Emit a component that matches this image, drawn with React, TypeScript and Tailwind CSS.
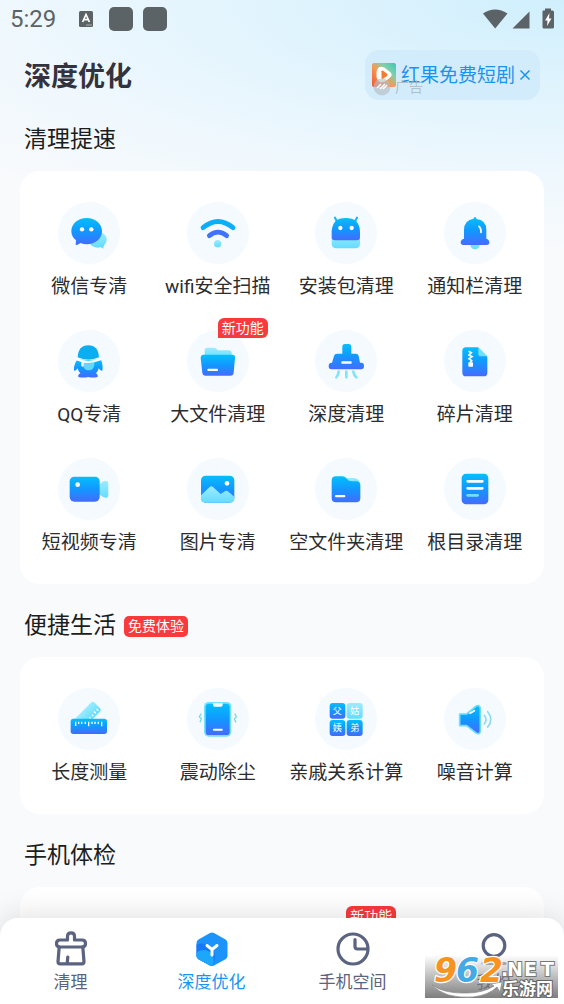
import type { ReactNode } from "react";

const MAIN = "url(#tone-main)";
const LIGHT = "url(#tone-light)";

function Tones() {
  return (
    <svg className="absolute size-0" aria-hidden="true">
      <defs>
        <linearGradient id="tone-main" x1="0" y1="0" x2="0" y2="1">
          <stop offset="0" stopColor="#05bffb" />
          <stop offset="0.5" stopColor="#1297ff" />
          <stop offset="1" stopColor="#456bff" />
        </linearGradient>
        <linearGradient id="tone-light" x1="0" y1="0" x2="0" y2="1">
          <stop offset="0" stopColor="#9cecff" />
          <stop offset="1" stopColor="#63dcff" />
        </linearGradient>
        <linearGradient id="tone-ad" x1="0" y1="1" x2="1" y2="0">
          <stop offset="0" stopColor="#f4512c" />
          <stop offset="0.45" stopColor="#f79a55" />
          <stop offset="0.7" stopColor="#7fd0ae" />
          <stop offset="1" stopColor="#35c8b4" />
        </linearGradient>
        <linearGradient id="tone-mark" x1="0" y1="0" x2="0" y2="1">
          <stop offset="0" stopColor="#777" stopOpacity="0" />
          <stop offset="1" stopColor="#777" stopOpacity="0.95" />
        </linearGradient>
      </defs>
    </svg>
  );
}

const icons = {
  chat: (
    <>
      <ellipse cx="119" cy="113" rx="27" ry="24" fill={LIGHT} />
      <path d="M122 132 L136 140 L138 124Z" fill="#63dcff" />
      <path d="M86 48C60 48 40 65 40 88C40 100 46 108 54 115L53 128Q54 130 57 129L68 123Q76 127 86 127C112 127 132 110 132 88C132 65 112 48 86 48Z" fill={MAIN} />
      <circle cx="72" cy="82" r="6.5" fill="#fff" />
      <circle cx="100" cy="82" r="6.5" fill="#fff" />
    </>
  ),
  wifi: (
    <g fill="none" strokeWidth="14" strokeLinecap="round">
      <path d="M48 77Q93 40 138 77" stroke="#0caef8" />
      <path d="M67 101Q93 80 119 101" stroke="#3f74fb" />
      <circle cx="92" cy="125" r="11" fill={LIGHT} />
    </g>
  ),
  android: (
    <>
      <rect x="50" y="95" width="85" height="44" rx="13" fill={LIGHT} />
      <path d="M60 47L68 62M126 47L118 62" stroke="#0cb6f8" strokeWidth="6" strokeLinecap="round" />
      <path d="M50 88Q52 48 92 48Q133 48 135 88V105Q135 115 125 115H60Q50 115 50 105Z" fill={MAIN} />
      <circle cx="76" cy="78" r="6.5" fill="#fff" />
      <circle cx="110" cy="78" r="6.5" fill="#fff" />
    </>
  ),
  bell: (
    <>
      <circle cx="93" cy="128" r="14" fill={LIGHT} />
      <path d="M89 50V48Q93 42 97 48V51Q127 54 127 84V110Q136 113 136 121Q136 129 128 129H58Q50 129 50 121Q50 113 60 110V84Q60 54 89 50Z" fill={MAIN} />
      <path d="M105 73Q112 79 111 91" stroke="#fff" strokeWidth="5" strokeLinecap="round" fill="none" />
    </>
  ),
  penguin: (
    <>
      <path d="M57 89L129 89Q136 108 133 122Q128 124 122 115Q120 125 114 130Q121 134 119 141Q105 144 91 141Q75 144 61 141Q59 134 67 130Q61 125 59 115Q53 124 48 122Q46 108 57 89Z" fill={MAIN} />
      <path d="M75 95H109V104Q107 121 92 121Q77 121 75 104Z" fill="#63d6fb" />
      <path d="M54 84Q91 100 129 84V91Q104 101 77 98V108Q73 112 70 108V96L54 91Z" fill="#fff" />
      <path d="M59 82Q61 46 91 46Q121 46 123 82Q91 95 59 82Z" fill="#0caef2" />
    </>
  ),
  bigFolder: (
    <>
      <path d="M53 86V61Q53 53 61 53H82Q88 53 92 61H125Q134 61 134 70V86Z" fill={LIGHT} />
      <path d="M41 84Q41 74 50 74H136Q145 74 144 84L140 128Q139 137 130 137H56Q47 137 46 128Z" fill={MAIN} />
      <rect x="61" y="116" width="32" height="7" rx="3" fill="#fff" />
    </>
  ),
  brush: (
    <>
      <path d="M82 50Q82 42 90 42H101Q109 42 109 50V71H122Q130 71 131 78L135 98H139Q147 98 147 108Q147 118 138 118H49Q41 118 41 108Q41 98 51 98L57 78Q59 71 66 71H82Z" fill={MAIN} />
      <rect x="79" y="94" width="31" height="7" rx="2" fill="#fff" />
      <path d="M71 125Q70 136 64 142M94 125V142M115 125Q117 136 124 142" stroke="#83e3fb" strokeWidth="8" strokeLinecap="round" fill="none" />
    </>
  ),
  zip: (
    <>
      <path d="M66 52H102L130 80V128Q130 139 119 139H66Q55 139 55 128V63Q55 52 66 52Z" fill={MAIN} />
      <path d="M103 52L130 79H109Q103 79 103 72Z" fill="#6de2ff" />
      <path d="M74 64L82 68L75 75L84 80L75 86L83 92L78 98" stroke="#fff" strokeWidth="5" fill="none" />
      <rect x="73" y="97" width="14" height="13" rx="2" fill="#fff" />
    </>
  ),
  video: (
    <>
      <path d="M122 80L136 70Q151 65 151 76V110Q151 123 137 118L122 108Z" fill={LIGHT} />
      <rect x="35" y="56" width="90" height="75" rx="14" fill={MAIN} />
      <circle cx="59" cy="80" r="7" fill="#fff" />
    </>
  ),
  image: (
    <>
      <rect x="42" y="53" width="100" height="81" rx="14" fill={MAIN} />
      <path d="M42 112L68 87Q73 82 78 87L101 108L115 99Q120 96 124 101L142 116V121Q142 134 129 134H55Q42 134 42 121Z" fill={LIGHT} />
      <circle cx="120" cy="76" r="7" fill="#fff" />
    </>
  ),
  folder: (
    <>
      <path d="M92 60H118Q134 62 135 80H100Z" fill={LIGHT} />
      <path d="M50 68Q50 55 63 55H83Q91 55 96 63Q101 70 110 70H124Q136 71 136 82V120Q136 133 123 133H63Q50 133 50 120Z" fill={MAIN} />
      <rect x="60" y="111" width="31" height="7" rx="3" fill="#fff" />
    </>
  ),
  doc: (
    <>
      <rect x="53" y="47" width="80" height="92" rx="13" fill={MAIN} />
      <path d="M71 70H115M71 91H115" stroke="#fff" strokeWidth="8" strokeLinecap="round" />
      <path d="M71 112H101" stroke="#70dfff" strokeWidth="8" strokeLinecap="round" />
    </>
  ),
  ruler: (
    <>
      <g transform="rotate(-45 88 76)">
        <rect x="38" y="61" width="88" height="38" rx="7" fill={LIGHT} />
        <path d="M62 86V94M73 89V94M84 89V94M95 89V94M106 86V94M117 86V94" stroke="#fff" strokeWidth="4" />
      </g>
      <rect x="38" y="92" width="109" height="46" rx="8" fill={MAIN} />
      <path d="M53 101V114M62 101V108M71 101V108M82 101V108M92 101V115M102 101V108M111 101V108M121 101V108M131 101V115" stroke="#fff" strokeWidth="4" />
    </>
  ),
  phone: (
    <>
      <rect x="51" y="42" width="82" height="104" rx="14" fill="#75e2fc" />
      <rect x="56" y="47" width="72" height="94" rx="10" fill={MAIN} />
      <path d="M78 46H107V51Q107 56 101 56H84Q78 56 78 51Z" fill="#fff" />
      <rect x="78" y="122" width="29" height="6" rx="2" fill="#fff" />
      <path d="M43 77L37 86L43 93L39 103M143 77L148 86L142 93L147 103" stroke="#77d9ee" strokeWidth="4" fill="none" />
    </>
  ),
  kin: (
    <>
      <rect x="44" y="45" width="47" height="47" rx="9" fill={MAIN} />
      <rect x="95" y="45" width="48" height="47" rx="9" fill={LIGHT} />
      <rect x="44" y="96" width="47" height="48" rx="9" fill={MAIN} />
      <rect x="95" y="96" width="48" height="48" rx="9" fill={MAIN} />
      <g fill="#fff" fontSize="27" textAnchor="middle">
        <text x="67" y="79">父</text>
        <text x="119" y="79">姑</text>
        <text x="67" y="130">姨</text>
        <text x="119" y="130">弟</text>
      </g>
    </>
  ),
  speaker: (
    <>
      <path d="M47 78H68L95 55Q107 48 109 61V129Q108 141 96 135L68 113H47Z" fill={MAIN} stroke="#6fdffb" strokeWidth="5" strokeLinejoin="round" />
      <path d="M78 76L91 68" stroke="#fff" strokeWidth="5" strokeLinecap="round" />
      <path d="M121 82Q131 95 121 108M131 71Q150 94 131 117" stroke="#8bdcf2" strokeWidth="5" fill="none" strokeLinecap="round" />
    </>
  ),
};

type IconName = keyof typeof icons;
type Item = { icon?: IconName; label?: string; badge?: string };

const cleanup: Item[] = [
  { icon: "chat", label: "微信专清" },
  { icon: "wifi", label: "wifi安全扫描" },
  { icon: "android", label: "安装包清理" },
  { icon: "bell", label: "通知栏清理" },
  { icon: "penguin", label: "QQ专清" },
  { icon: "bigFolder", label: "大文件清理", badge: "新功能" },
  { icon: "brush", label: "深度清理" },
  { icon: "zip", label: "碎片清理" },
  { icon: "video", label: "短视频专清" },
  { icon: "image", label: "图片专清" },
  { icon: "folder", label: "空文件夹清理" },
  { icon: "doc", label: "根目录清理" },
];

const life: Item[] = [
  { icon: "ruler", label: "长度测量" },
  { icon: "phone", label: "震动除尘" },
  { icon: "kin", label: "亲戚关系计算" },
  { icon: "speaker", label: "噪音计算" },
];

const checkup: Item[] = [{}, {}, { badge: "新功能" }, {}];

function Tile({ icon, label, badge }: Item) {
  const content = (
    <>
      <span className="relative size-[62px] rounded-full bg-[#f5fafe]">
        {icon && (
          <svg viewBox="0 0 186 186" className="size-full" aria-hidden="true">
            {icons[icon]}
          </svg>
        )}
        {badge && (
          <span className="absolute -top-3 left-1/2 rounded-md rounded-bl-none bg-[#f83a3d] px-1 text-sm leading-5 whitespace-nowrap text-white">
            {badge}
          </span>
        )}
      </span>
      {label && <span className="text-[19px] leading-7 whitespace-nowrap text-[#2c2c2e]">{label}</span>}
    </>
  );
  return label ? (
    <button type="button" className="flex flex-col items-center gap-[9px]">
      {content}
    </button>
  ) : (
    <div className="flex flex-col items-center">{content}</div>
  );
}

function Section({ title, tag, items }: { title: string; tag?: string; items: Item[] }) {
  return (
    <section>
      <div className="mb-[15px] flex items-center gap-2 px-1">
        <h2 className="text-[23px] leading-8 text-[#1c1d20]">{title}</h2>
        {tag && <span className="rounded-[5px] bg-[#f83a3d] px-1 text-sm leading-[21px] text-white">{tag}</span>}
      </div>
      <div className="grid grid-cols-4 gap-y-[29px] rounded-[20px] bg-white px-[5px] pt-[31px] pb-[27px]">
        {items.map((item, i) => (
          <Tile key={i} {...item} />
        ))}
      </div>
    </section>
  );
}

function StatusBar() {
  return (
    <div className="flex h-[38px] items-center justify-between pr-2.5 pl-2.5 text-[#5c6366]">
      <div className="flex items-center">
        <span className="text-2xl">5:29</span>
        <svg viewBox="0 0 16 18" className="ml-[22px] h-[18px] w-4" aria-hidden="true">
          <rect x="1" y="1" width="14" height="16" rx="1.5" fill="currentColor" />
          <path d="M4.600 12L8 4.500L11.400 12M6 9.600H10" stroke="#fff" strokeWidth="1.7" fill="none" />
          <path d="M8.500 15H14" stroke="#fff" strokeWidth="1" strokeDasharray="1 1" />
        </svg>
        <span className="ml-[15px] size-6 rounded-[5px] bg-[#5c6366]" />
        <span className="ml-2.5 size-6 rounded-[5px] bg-[#5c6366]" />
      </div>
      <svg viewBox="0 0 72 22" className="h-[22px] w-[72px]" fill="currentColor" aria-hidden="true">
        <path d="M1 5.500Q13 -2.500 25.500 5.500L13.200 20.500Z" />
        <path d="M47.500 3.500V20.500H30.500Z" />
        <path d="M61 2.500H63V0.500H69V2.500H70.500Q72 2.500 72 4V19Q72 20.500 70.500 20.500H62Q60.500 20.500 60.500 19V4Q60.500 2.500 61 2.500Z" />
        <path d="M67.500 5L63 12.500H65.500L65 18L69.500 10.500H67Z" fill="#fff" />
      </svg>
    </div>
  );
}

function Promo() {
  return (
    <div className="relative flex h-[50px] items-center rounded-[14px] bg-[#d3ecfb] pr-[5px] pl-[7px] text-[#1b94ee]">
      <a href="#promo" className="flex items-center gap-[5px]">
        <svg viewBox="0 0 24 24" className="size-6" aria-hidden="true">
          <rect width="24" height="24" rx="2" fill="url(#tone-ad)" />
          <path d="M7.500 4Q11 2.500 15.500 7Q22 11 18.500 14Q12 20.500 8 19Q4 17 4.500 11Q4.500 5.500 7.500 4Z" fill="#fff" />
          <path d="M9.500 8.200Q10 7 11.500 8L15 10.800Q16 12 15 13L11.500 15.600Q10 16.500 9.500 15Z" fill="#f57b35" />
        </svg>
        <span className="pt-0.5 text-[19px] leading-7">红果免费短剧</span>
      </a>
      <button type="button" aria-label="关闭" className="flex h-6 w-5 items-center justify-center">
        <svg viewBox="0 0 12 12" className="size-3" aria-hidden="true">
          <path d="M1.500 1.500L10.500 10.500M10.500 1.500L1.500 10.500" stroke="currentColor" strokeWidth="1.500" />
        </svg>
      </button>
      <span className="absolute bottom-1 left-2 flex items-center gap-1 text-sm leading-[18px] text-[#a7b6c0]/80">
        <svg viewBox="0 0 18 18" className="size-[18px]" aria-hidden="true">
          <circle cx="9" cy="9" r="8.500" fill="#b5bfc4" fillOpacity="0.65" />
          <path d="M4 10L8 6M7 11L12 6M10 11L14 7" stroke="#fff" strokeWidth="1.500" />
        </svg>
        广告
      </span>
    </div>
  );
}

const line = { fill: "none", stroke: "#5a6380", strokeWidth: 3.2, strokeLinejoin: "round", strokeLinecap: "round" } as const;

const tabs: { label: string; active?: boolean; icon: ReactNode }[] = [
  {
    label: "清理",
    icon: (
      <g {...line}>
        <path d="M14.500 9V5Q14.500 1.800 18 1.800Q21.500 1.800 21.500 5V9H29Q32.500 9 32.500 12.500Q32.500 16 29 16H7Q3.500 16 3.500 12.500Q3.500 9 7 9Z" />
        <path d="M6.200 16L5 30.500Q5 32.800 7.200 32.800H28.800Q31 32.800 31 30.500L29.800 16M14.200 32.500L14.800 26" />
      </g>
    ),
  },
  {
    label: "深度优化",
    active: true,
    icon: (
      <>
        <path d="M16 2Q18 1 20 2L31.500 8.500Q33.500 9.500 33.500 12V25Q33.500 27 31.500 28.200L20 34.500Q18 35.500 16 34.500L4.500 28.200Q2.500 27 2.500 25V12Q2.500 9.500 4.500 8.500Z" fill="#1c93fb" />
        <path d="M2.500 13.500Q14 10 19 19Q23 26 18.500 35Q17 35.200 16 34.500L4.500 28.200Q2.500 27 2.500 25Z" fill="#1677fb" />
        <path d="M3 21Q12 16 18 23Q21 28 18.500 35Q17 35.200 16 34.500L4.500 28.200Q2.500 27 2.500 25Z" fill="#1ba8fa" />
        <path d="M13 14.500L18 18.500L23 14.500M18 18.500V24" stroke="#fff" strokeWidth="3" strokeLinecap="round" strokeLinejoin="round" fill="none" />
      </>
    ),
  },
  {
    label: "手机空间",
    icon: (
      <g {...line}>
        <circle cx="18" cy="18" r="15" />
        <path d="M20 8.500V15.500Q20 18 22.500 18H32" />
      </g>
    ),
  },
  {
    label: "我的",
    icon: (
      <g {...line}>
        <circle cx="18" cy="14.500" r="10.800" />
        <path d="M7 32.500H29" strokeOpacity="0.5" />
      </g>
    ),
  },
];

function SiteMark() {
  return (
    <svg
      viewBox="0 0 133 43"
      className="pointer-events-none absolute right-1.5 bottom-1.5 h-[43px] w-[133px] overflow-visible"
      aria-hidden="true"
    >
      <rect width="133" height="43" fill="url(#tone-mark)" />
      <g className="font-['DejaVu_Sans']" fontWeight="bold" fontStyle="italic" fontSize="33" stroke="#fff" strokeWidth="2.500" paintOrder="stroke" strokeLinejoin="round">
        <text x="9" y="27" fill="#f7931e">9</text>
        <text x="31" y="27" fill="#45a9e6">6</text>
        <text x="55" y="27" fill="#f7931e">2</text>
      </g>
      <g className="font-['DejaVu_Sans']" fontWeight="bold" fontSize="19" fill="#fff" stroke="#777" strokeWidth="2" paintOrder="stroke">
        <text x="76" y="21">.</text>
        <text x="82" y="21">N</text>
        <text x="99" y="21">E</text>
        <text x="116" y="21">T</text>
      </g>
      <path d="M7 30Q20 44 48 42Q64 40 72 32L75 37L77 27L66 29L69 31Q58 38 42 38Q20 39 7 30Z" fill="#fff" stroke="#888" strokeWidth="0.700" />
      <text x="77" y="40" fontWeight="bold" fontSize="17" fill="#fff" stroke="#666" strokeWidth="2" paintOrder="stroke">乐游网</text>
    </svg>
  );
}

export default function App() {
  return (
    <div className="relative flex h-screen flex-col overflow-hidden bg-[#f8fafc] bg-[radial-gradient(ellipse_140%_250px_at_100%_0px,#d0effd_0%,#e5f5fd_48%,#f0f8fd_75%,#f8fafc_100%)] font-[Roboto,'Noto_Sans_CJK_SC',sans-serif]">
      <Tones />
      <StatusBar />
      <header className="flex items-center justify-between pt-3 pr-6 pl-6">
        <h1 className="pt-1 text-[27px] leading-9 font-bold text-[#33333d]">深度优化</h1>
        <Promo />
      </header>
      <main className="flex min-h-0 flex-1 flex-col gap-[26px] overflow-hidden px-5 pt-6">
        <Section title="清理提速" items={cleanup} />
        <Section title="便捷生活" tag="免费体验" items={life} />
        <Section title="手机体检" items={checkup} />
      </main>
      <nav className="relative -mt-5 grid shrink-0 grid-cols-4 rounded-t-[18px] bg-white pt-[13px] pb-2.5 shadow-[0_-2px_30px_rgba(0,0,0,0.13)]">
        {tabs.map((tab) => (
          <a
            key={tab.label}
            href="#tab"
            aria-current={tab.active ? "page" : undefined}
            className="flex flex-col items-center gap-[3px] text-[17px] leading-6 text-[#5a6380] aria-[current=page]:text-[#1b94ee]"
          >
            <svg viewBox="0 0 36 36" className="size-9" aria-hidden="true">
              {tab.icon}
            </svg>
            {tab.label}
          </a>
        ))}
        <SiteMark />
      </nav>
    </div>
  );
}
